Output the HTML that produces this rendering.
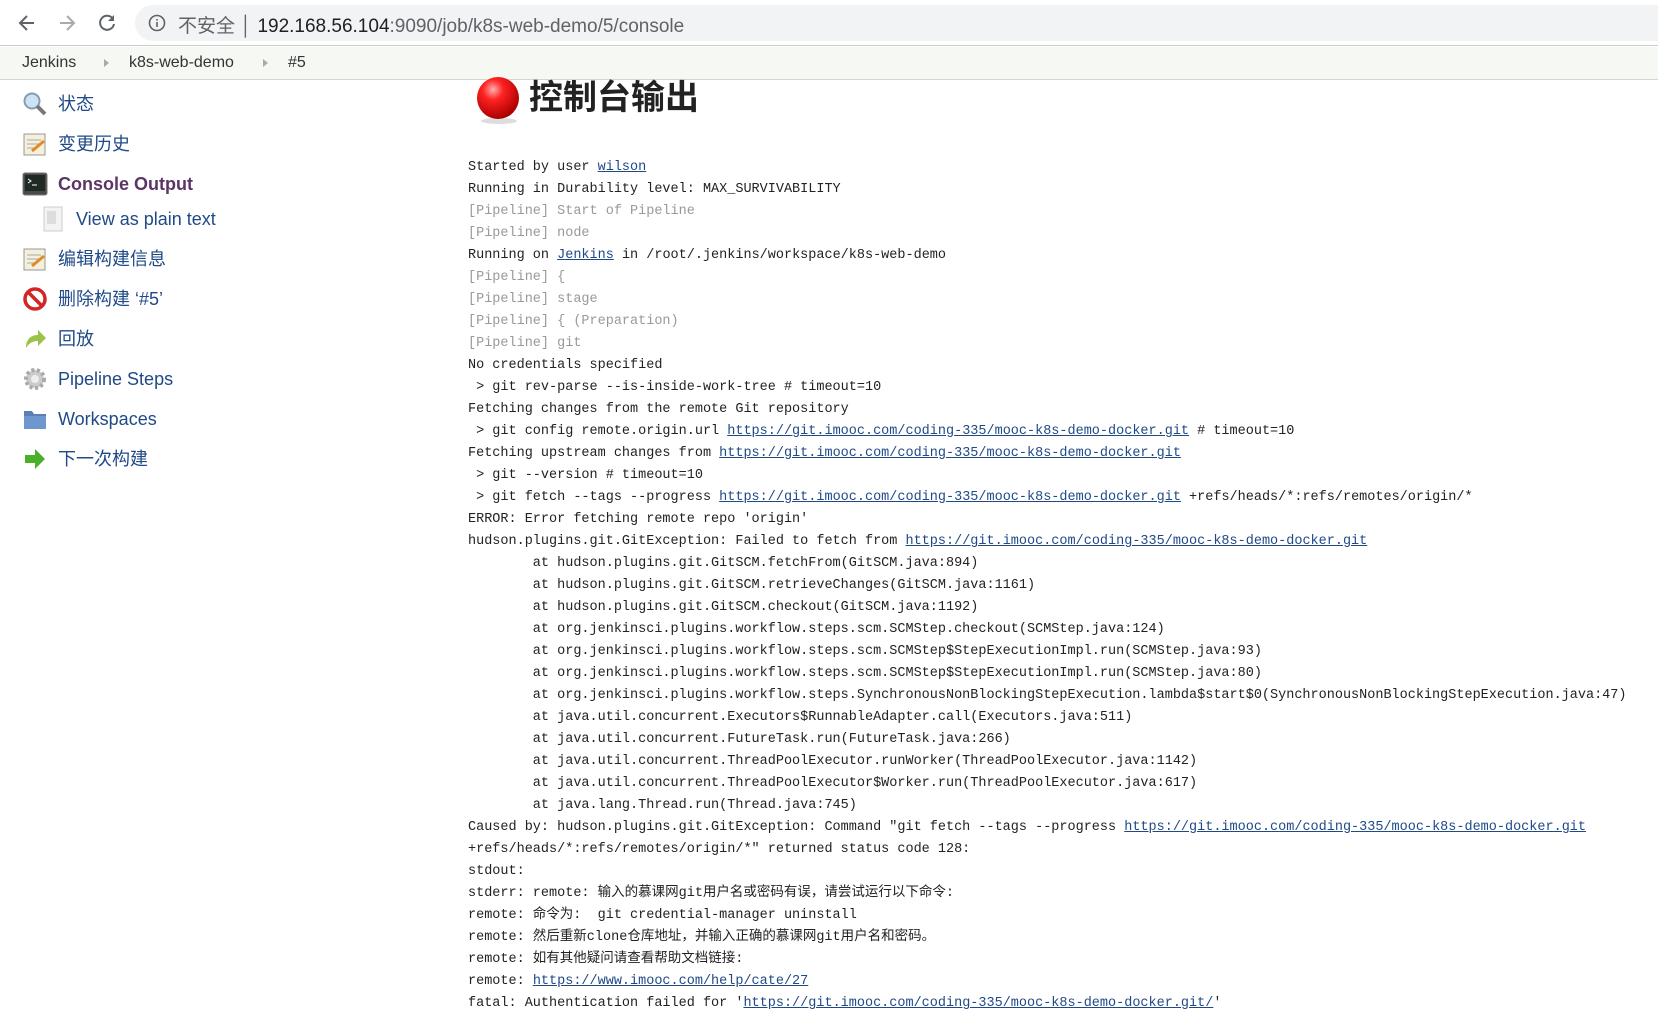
<!DOCTYPE html>
<html><head><meta charset="utf-8">
<style>
*{margin:0;padding:0;box-sizing:border-box}
html,body{width:1658px;height:1025px;overflow:hidden}
body{background:#fff;font-family:"Liberation Sans","Noto Sans CJK SC",sans-serif;position:relative}
.top{position:absolute;left:0;top:0;width:1658px;height:46px;background:#fff;border-bottom:1px solid #ccc}
.pill{position:absolute;left:135px;top:5px;width:1540px;height:36px;border-radius:18px;background:#f1f3f4}
.url{position:absolute;left:178px;top:11px;font-size:19px;color:#5f6368;white-space:pre}
.url b{font-weight:normal;color:#202124}
.bc{position:absolute;left:0;top:47px;width:1658px;height:33px;background:#f6f8f4;border-bottom:1px solid #d3d7cf;font-size:16px;color:#333}
.bc span{position:absolute;top:7px}
.tri{position:absolute;top:12px;width:0;height:0;border-left:5px solid #aaa;border-top:4px solid transparent;border-bottom:4px solid transparent}
.side{position:absolute;left:58px;font-size:18px;color:#204a87;line-height:20px;transform:translateY(-10px);white-space:nowrap}
.ic{position:absolute;left:22px;width:26px;height:26px;transform:translateY(-13px)}
.con{position:absolute;left:468px;font-family:"Liberation Mono","Noto Sans CJK SC",monospace;font-size:13.5px;color:#222;line-height:22px}
.con div{height:22px;white-space:pre}
.g{color:#999}
a{color:#204a87;text-decoration:underline}
</style></head><body>
<div class="top">
<svg style="position:absolute;left:16px;top:12px" width="22" height="22" viewBox="0 0 22 22"><path d="M18 11H5M11 4l-7 7 7 7" fill="none" stroke="#5f6368" stroke-width="2"/></svg>
<svg style="position:absolute;left:56px;top:12px" width="22" height="22" viewBox="0 0 22 22"><path d="M4 11h13M11 4l7 7-7 7" fill="none" stroke="#aaa" stroke-width="2"/></svg>
<svg style="position:absolute;left:96px;top:12px" width="22" height="22" viewBox="0 0 22 22"><path d="M17 7A7 7 0 1 0 18 12" fill="none" stroke="#5f6368" stroke-width="2"/><path d="M18 3v6h-6z" fill="#5f6368"/></svg>
<div class="pill"></div>
<svg style="position:absolute;left:148px;top:14px" width="18" height="18" viewBox="0 0 18 18"><circle cx="9" cy="9" r="7.5" fill="none" stroke="#5f6368" stroke-width="1.6"/><rect x="8.2" y="8" width="1.6" height="5" fill="#5f6368"/><rect x="8.2" y="5" width="1.6" height="1.6" fill="#5f6368"/></svg>
<div class="url">不安全 │ <b>192.168.56.104</b>:9090/job/k8s-web-demo/5/console</div>
</div>
<div class="bc"><span style="left:22px">Jenkins</span><i class="tri" style="left:104px"></i><span style="left:129px">k8s-web-demo</span><i class="tri" style="left:263px"></i><span style="left:288px">#5</span></div>

<svg class="ic" style="top:104px" viewBox="0 0 26 26"><circle cx="10" cy="10" r="7.5" fill="#cde3f5" stroke="#8a9bb0" stroke-width="2"/><path d="M15 15l8 8" stroke="#777" stroke-width="4"/></svg>
<div class="side" style="top:104px">状态</div>
<svg class="ic" style="top:144px" viewBox="0 0 26 26"><rect x="2" y="3" width="21" height="21" fill="#f4f0dc" stroke="#999"/><path d="M5 9h14M5 13h12M5 17h10" stroke="#aaa"/><path d="M10 20l12-10" stroke="#e08a2a" stroke-width="3"/></svg>
<div class="side" style="top:144px">变更历史</div>
<svg class="ic" style="top:184px" viewBox="0 0 26 26"><rect x="1" y="2" width="24" height="22" rx="2" fill="#4a4a4a" stroke="#777"/><rect x="3" y="4" width="20" height="16" fill="#1f2a24"/><path d="M6 8l3 2-3 2M10 14h5" stroke="#fff" fill="none"/></svg>
<div class="side" style="top:184px;font-weight:bold;color:#5c3566">Console Output</div>
<svg class="ic" style="top:219px;left:40px" viewBox="0 0 26 26"><rect x="4" y="1" width="18" height="24" fill="#f3f3f3" stroke="#ccc"/><rect x="7" y="5" width="9" height="13" fill="#ddd"/></svg>
<div class="side" style="top:219px;left:76px">View as plain text</div>
<svg class="ic" style="top:259px" viewBox="0 0 26 26"><rect x="2" y="3" width="21" height="21" fill="#f4f0dc" stroke="#999"/><path d="M5 9h14M5 13h12M5 17h10" stroke="#aaa"/><path d="M10 20l12-10" stroke="#e08a2a" stroke-width="3"/></svg>
<div class="side" style="top:259px">编辑构建信息</div>
<svg class="ic" style="top:299px" viewBox="0 0 26 26"><circle cx="13" cy="13" r="10" fill="#fff" stroke="#d42424" stroke-width="3.5"/><path d="M6 6l14 14" stroke="#d42424" stroke-width="3.5"/></svg>
<div class="side" style="top:299px">删除构建 ‘#5’</div>
<svg class="ic" style="top:339px" viewBox="0 0 26 26"><path d="M4 22c0-9 5-13 12-13V4l8 8-8 8v-5c-5 0-9 2-12 7z" fill="#9cc24a"/></svg>
<div class="side" style="top:339px">回放</div>
<svg class="ic" style="top:379px" viewBox="0 0 26 26"><circle cx="13" cy="13" r="9" fill="#ccc" stroke="#aaa" stroke-width="4" stroke-dasharray="3 2.5"/><circle cx="13" cy="13" r="4" fill="#eee"/></svg>
<div class="side" style="top:379px">Pipeline Steps</div>
<svg class="ic" style="top:419px" viewBox="0 0 26 26"><path d="M2 5h8l2 3h12v15H2z" fill="#5b7fb5"/><rect x="2" y="10" width="22" height="13" fill="#6e97d0"/></svg>
<div class="side" style="top:419px">Workspaces</div>
<svg class="ic" style="top:459px" viewBox="0 0 26 26"><path d="M3 9h10V3l10 10-10 10v-6H3z" fill="#4caf2a"/></svg>
<div class="side" style="top:459px">下一次构建</div>

<svg style="position:absolute;left:474px;top:76px" width="50" height="50" viewBox="0 0 50 50"><defs><radialGradient id="r" cx="0.38" cy="0.3" r="0.7"><stop offset="0" stop-color="#ffb0b0"/><stop offset="0.35" stop-color="#f22"/><stop offset="1" stop-color="#a00"/></radialGradient></defs><ellipse cx="25" cy="45" rx="18" ry="3" fill="#ddd"/><circle cx="24" cy="22" r="21" fill="url(#r)"/></svg>
<div style="position:absolute;left:529px;top:78px;font-size:34px;font-weight:bold;color:#222;line-height:40px">控制台输出</div>

<div class="con" style="top:157px"><div>Started by user <a>wilson</a></div><div>Running in Durability level: MAX_SURVIVABILITY</div><div class="g">[Pipeline] Start of Pipeline</div><div class="g">[Pipeline] node</div><div>Running on <a>Jenkins</a> in /root/.jenkins/workspace/k8s-web-demo</div><div class="g">[Pipeline] {</div><div class="g">[Pipeline] stage</div><div class="g">[Pipeline] { (Preparation)</div><div class="g">[Pipeline] git</div><div>No credentials specified</div><div> &gt; git rev-parse --is-inside-work-tree # timeout=10</div><div>Fetching changes from the remote Git repository</div><div> &gt; git config remote.origin.url <a>https://git.imooc.com/coding-335/mooc-k8s-demo-docker.git</a> # timeout=10</div><div>Fetching upstream changes from <a>https://git.imooc.com/coding-335/mooc-k8s-demo-docker.git</a></div><div> &gt; git --version # timeout=10</div><div> &gt; git fetch --tags --progress <a>https://git.imooc.com/coding-335/mooc-k8s-demo-docker.git</a> +refs/heads/*:refs/remotes/origin/*</div><div>ERROR: Error fetching remote repo 'origin'</div><div>hudson.plugins.git.GitException: Failed to fetch from <a>https://git.imooc.com/coding-335/mooc-k8s-demo-docker.git</a></div><div>        at hudson.plugins.git.GitSCM.fetchFrom(GitSCM.java:894)</div><div>        at hudson.plugins.git.GitSCM.retrieveChanges(GitSCM.java:1161)</div><div>        at hudson.plugins.git.GitSCM.checkout(GitSCM.java:1192)</div><div>        at org.jenkinsci.plugins.workflow.steps.scm.SCMStep.checkout(SCMStep.java:124)</div><div>        at org.jenkinsci.plugins.workflow.steps.scm.SCMStep$StepExecutionImpl.run(SCMStep.java:93)</div><div>        at org.jenkinsci.plugins.workflow.steps.scm.SCMStep$StepExecutionImpl.run(SCMStep.java:80)</div><div>        at org.jenkinsci.plugins.workflow.steps.SynchronousNonBlockingStepExecution.lambda$start$0(SynchronousNonBlockingStepExecution.java:47)</div><div>        at java.util.concurrent.Executors$RunnableAdapter.call(Executors.java:511)</div><div>        at java.util.concurrent.FutureTask.run(FutureTask.java:266)</div><div>        at java.util.concurrent.ThreadPoolExecutor.runWorker(ThreadPoolExecutor.java:1142)</div><div>        at java.util.concurrent.ThreadPoolExecutor$Worker.run(ThreadPoolExecutor.java:617)</div><div>        at java.lang.Thread.run(Thread.java:745)</div><div>Caused by: hudson.plugins.git.GitException: Command "git fetch --tags --progress <a>https://git.imooc.com/coding-335/mooc-k8s-demo-docker.git</a></div><div>+refs/heads/*:refs/remotes/origin/*" returned status code 128:</div><div>stdout:</div><div>stderr: remote: 输入的慕课网git用户名或密码有误，请尝试运行以下命令:</div><div>remote: 命令为:  git credential-manager uninstall</div><div>remote: 然后重新clone仓库地址，并输入正确的慕课网git用户名和密码。</div><div>remote: 如有其他疑问请查看帮助文档链接:</div><div>remote: <a>https://www.imooc.com/help/cate/27</a></div><div>fatal: Authentication failed for '<a>https://git.imooc.com/coding-335/mooc-k8s-demo-docker.git/</a>'</div></div>
</body></html>
